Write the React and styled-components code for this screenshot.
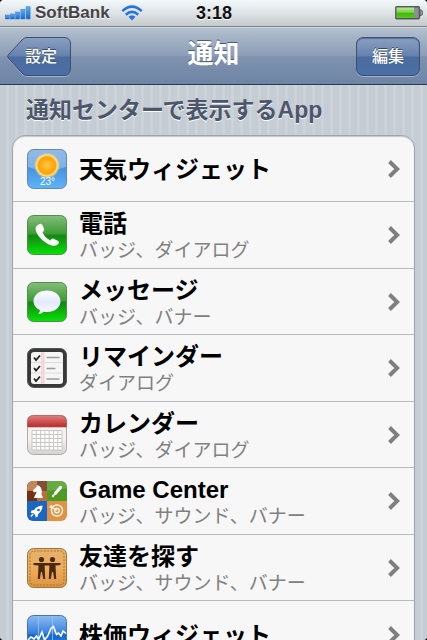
import React from "react";
import styled, { createGlobalStyle } from "styled-components";

const GlobalStyle = createGlobalStyle`
  * {
    box-sizing: border-box;
  }
  body {
    margin: 0;
    background: #000;
    font-family: "Liberation Sans", "Noto Sans CJK JP", sans-serif;
  }
`;

const apps = [
  { name: "天気ウィジェット", icon: WeatherIcon },
  { name: "電話", detail: "バッジ、ダイアログ", icon: PhoneIcon },
  { name: "メッセージ", detail: "バッジ、バナー", icon: MessageIcon },
  { name: "リマインダー", detail: "ダイアログ", icon: ReminderIcon },
  { name: "カレンダー", detail: "バッジ、ダイアログ", icon: CalendarIcon },
  { name: "Game Center", detail: "バッジ、サウンド、バナー", icon: GameIcon },
  { name: "友達を探す", detail: "バッジ、サウンド、バナー", icon: FriendsIcon },
  { name: "株価ウィジェット", icon: StocksIcon },
];

function App() {
  return (
    <Screen>
      <GlobalStyle />
      <StatusBar>
        <Carrier>
          <SignalIcon />
          <span>SoftBank</span>
          <WifiIcon />
        </Carrier>
        <Time>3:18</Time>
        <BatteryIcon />
      </StatusBar>
      <NavBar>
        <BackButton type="button">
          <BackShape />
          <span>設定</span>
        </BackButton>
        <Title>通知</Title>
        <EditButton type="button">編集</EditButton>
      </NavBar>
      <Content>
        <SectionTitle>通知センターで表示するApp</SectionTitle>
        <List>
          {apps.map(({ name, detail, icon: Icon }) => (
            <Item key={name}>
              <Row href="#">
                <Icon />
                <Labels>
                  <Name>{name}</Name>
                  {detail && <Detail>{detail}</Detail>}
                </Labels>
                <Chevron />
              </Row>
            </Item>
          ))}
        </List>
      </Content>
    </Screen>
  );
}

const Screen = styled.div`
  display: flex;
  flex-direction: column;
  height: 100vh;
  overflow: hidden;
  border-radius: 4px;
  background: #c5ccd4;
`;

const StatusBar = styled.header`
  display: grid;
  grid-template-columns: 1fr auto 1fr;
  align-items: center;
  flex: none;
  height: 27px;
  padding: 0 4px 0 5px;
  background: linear-gradient(#f3f8fa, #dde3e6 50%, #c4cacc);
  border-bottom: 1px solid #7e8386;
  > svg {
    justify-self: end;
  }
`;

const Carrier = styled.div`
  display: flex;
  align-items: center;
  color: #444;
  font-size: 17px;
  font-weight: bold;
  text-shadow: 0 1px 0 #fff;
  span {
    margin: 0 11px 0 4px;
  }
`;

const Time = styled.div`
  color: #111;
  font-size: 18px;
  font-weight: bold;
  text-shadow: 0 1px 0 #fff;
`;

const NavBar = styled.nav`
  display: grid;
  grid-template-columns: 1fr auto 1fr;
  align-items: center;
  flex: none;
  height: 58px;
  padding: 0 7px;
  background: linear-gradient(#b2bfce, #8b9cb6 50%, #8093b0 51%, #6d84a5);
  border-top: 1px solid #ced7e1;
  border-bottom: 1px solid #2f3b4d;
`;

const Title = styled.h1`
  margin: 0;
  color: #fff;
  font-size: 26px;
  line-height: 34px;
  padding-bottom: 4px;
  text-shadow: 0 -1px 0 #4c5c74;
`;

const NavButton = styled.button`
  height: 39px;
  width: 64px;
  padding: 0 0 2px;
  border: 0;
  background: none;
  color: #fff;
  font-family: inherit;
  font-size: 16px;
  font-weight: 500;
  text-shadow: 0 -1px 0 #33486b;
  cursor: pointer;
`;

const BackButton = styled(NavButton)`
  position: relative;
  span {
    position: relative;
    padding-left: 4px;
  }
  svg {
    position: absolute;
    top: 0;
    left: 0;
  }
`;

const EditButton = styled(NavButton)`
  justify-self: end;
  border: 1px solid #3b5074;
  border-radius: 7px;
  background: linear-gradient(#8ba0c0, #6481ad 49%, #4b6c9f 51%, #4b6fa6);
  box-shadow: 0 1px 0 #9fb0c8, inset 0 1px 1px #5b7297;
`;

const Content = styled.main`
  flex: 1;
  min-height: 0;
  overflow: auto;
  scrollbar-width: none;
  padding: 8px 12px;
  background: repeating-linear-gradient(
    90deg,
    #c5ccd4 0,
    #c5ccd4 6px,
    #cbd2d8 6px,
    #cbd2d8 9px
  );
`;

const SectionTitle = styled.h2`
  margin: 0 0 8px;
  padding-left: 14px;
  color: #4c566c;
  font-size: 23px;
  line-height: 34px;
  text-shadow: 0 1px 0 #fff;
`;

const List = styled.ul`
  margin: 0;
  padding: 0;
  list-style: none;
  background: #f7f7f7;
  border: 1px solid #a0a5ab;
  border-radius: 13px;
  box-shadow: inset 0 1px 1px #c4c7ca;
  overflow: hidden;
`;

const Item = styled.li`
  height: 66px;
  border-bottom: 1px solid #b9bbbd;
  &:nth-child(even) {
    height: 67px;
  }
  &:last-child {
    border-bottom: 0;
  }
`;

const Row = styled.a`
  display: flex;
  align-items: center;
  gap: 12px;
  height: 100%;
  padding: 0 14px;
  color: #000;
  text-decoration: none;
  > svg {
    flex: none;
  }
`;

const Labels = styled.span`
  display: flex;
  flex-direction: column;
  flex: 1;
  min-width: 0;
  padding-top: 2px;
  white-space: nowrap;
`;

const Name = styled.span`
  font-size: 24px;
  font-weight: bold;
  line-height: 30px;
`;

const Detail = styled.span`
  color: #808080;
  font-size: 19px;
  line-height: 24px;
`;

function SignalIcon() {
  return (
    <svg width="26" height="14" viewBox="0 0 26 14" aria-hidden="true">
      <defs>
        <linearGradient id="signal" x2="0" y2="1">
          <stop offset="0" stopColor="#58b0f5" />
          <stop offset="1" stopColor="#1567d6" />
        </linearGradient>
      </defs>
      <g fill="url(#signal)" stroke="#2a6fc4" strokeWidth=".5">
        <rect x=".3" y="9" width="4" height="4" />
        <rect x="5.5" y="8" width="4" height="5" />
        <rect x="10.7" y="6" width="4" height="7" />
        <rect x="15.9" y="3.5" width="4" height="9.5" />
        <rect x="21.1" y=".8" width="4" height="12.2" />
      </g>
    </svg>
  );
}

function WifiIcon() {
  return (
    <svg width="22" height="16" viewBox="0 0 22 16" aria-hidden="true">
      <g fill="none" stroke="#2673de" strokeWidth="2.6">
        <path d="M1.3 6.1Q11-2.8 20.7 6.1" />
        <path d="M4.8 9.7Q11 4 17.2 9.7" />
      </g>
      <path d="M7.5 11.8Q11 8.7 14.5 11.8L11 15.5z" fill="#2673de" />
    </svg>
  );
}

function BatteryIcon() {
  return (
    <svg width="28" height="14" viewBox="0 0 28 14" aria-hidden="true">
      <defs>
        <linearGradient id="charge" x2="0" y2="1">
          <stop offset="0" stopColor="#b5ec91" />
          <stop offset=".45" stopColor="#77d044" />
          <stop offset=".55" stopColor="#43b90f" />
          <stop offset="1" stopColor="#58c51f" />
        </linearGradient>
      </defs>
      <rect x=".8" y=".8" width="23.6" height="12" rx="1" fill="#8c8f95" stroke="#55585e" strokeWidth="1.4" />
      <rect x="1.6" y="1.6" width="17.4" height="10.4" fill="url(#charge)" />
      <path d="M25 4h1.2q1.3 0 1.3 2.8t-1.3 2.8H25z" fill="#a4a7ac" stroke="#55585e" />
    </svg>
  );
}

function BackShape() {
  return (
    <svg width="64" height="40" viewBox="0 0 64 40" aria-hidden="true">
      <defs>
        <linearGradient id="back" x2="0" y2="1">
          <stop offset="0" stopColor="#8ba0c0" />
          <stop offset=".49" stopColor="#6481ad" />
          <stop offset=".51" stopColor="#4b6c9f" />
          <stop offset="1" stopColor="#4b6fa6" />
        </linearGradient>
      </defs>
      <path d="M20 1.5h37q6.5 0 6.5 6.5v25q0 6.5-6.5 6.5H20q-3 0-5-2.6L1.5 22q-1-1.5 0-3L15 4.5q2-3 5-3z" fill="none" stroke="#9fb0c8" />
      <path d="M20 .5h37q6.5 0 6.5 6.5v25q0 6.5-6.5 6.5H20q-3 0-5-2.5L1.2 21q-1-1.5 0-3L15 3q2-2.5 5-2.5z" fill="url(#back)" stroke="#3b5074" />
    </svg>
  );
}

function Chevron() {
  return (
    <svg width="13" height="18" viewBox="0 0 13 18" aria-hidden="true">
      <path d="M2.5 1.5L10.2 9l-7.7 7.5" fill="none" stroke="#7f7f7f" strokeWidth="4" />
    </svg>
  );
}

function WeatherIcon() {
  return (
    <svg width="40" height="40" viewBox="0 0 40 40" aria-hidden="true">
      <defs>
        <linearGradient id="sky" x2="0" y2="1">
          <stop offset="0" stopColor="#6b9fdc" />
          <stop offset=".5" stopColor="#4a93e0" />
          <stop offset="1" stopColor="#5cb5f8" />
        </linearGradient>
        <radialGradient id="sun">
          <stop offset="0" stopColor="#ffcb3c" />
          <stop offset=".65" stopColor="#ff9e10" />
          <stop offset=".8" stopColor="#ffe36b" />
          <stop offset="1" stopColor="#ffe36b" stopOpacity="0" />
        </radialGradient>
      </defs>
      <rect x=".5" y=".5" width="39" height="39" rx="6" fill="url(#sky)" stroke="#6688b5" />
      <path d="M1 7q0-6 6-6h26q6 0 6 6v11Q20 25 1 18z" fill="#fff" opacity=".28" />
      <circle cx="20" cy="16.5" r="13" fill="url(#sun)" />
      <text x="20.5" y="36" fill="#fff" fontSize="10" textAnchor="middle">23°</text>
    </svg>
  );
}

function GreenTile({ id }) {
  return (
    <>
      <defs>
        <linearGradient id={id} x2="0" y2="1">
          <stop offset="0" stopColor="#86bd7d" />
          <stop offset=".46" stopColor="#3d9c35" />
          <stop offset=".52" stopColor="#148713" />
          <stop offset="1" stopColor="#06e305" />
        </linearGradient>
      </defs>
      <rect x=".5" y=".5" width="39" height="39" rx="6" fill={`url(#${id})`} stroke="#4d9149" />
    </>
  );
}

function PhoneIcon() {
  return (
    <svg width="40" height="40" viewBox="0 0 40 40" aria-hidden="true">
      <GreenTile id="phone" />
      <path
        d="M11.5 9.500c2-1.500 3.500-.8 4.300 1.200l1.300 3c.7 1.700-.5 2.500-1.600 3.500 1.500 3.500 4 6.200 7.800 8.200 1.200-1.300 2-2.300 3.600-1.500l3.500 1.700c2 1 2 2.500.3 4-2.500 2-6.500 1.300-10.700-1.200C14 24.800 9.500 19.500 8.600 14.500c-.3-2.200 1-3.800 2.900-5z"
        fill="#f8fbf8"
      />
    </svg>
  );
}

function MessageIcon() {
  return (
    <svg width="40" height="40" viewBox="0 0 40 40" aria-hidden="true">
      <GreenTile id="message" />
      <defs>
        <linearGradient id="bubble" x2="0" y2="1">
          <stop offset="0" stopColor="#fff" />
          <stop offset=".5" stopColor="#e4e9fa" />
          <stop offset="1" stopColor="#fbfcff" />
        </linearGradient>
      </defs>
      <path
        d="M20 8.500c7.800 0 13.500 4.700 13.500 10.700S27.800 30 20 30c-1.200 0-2.300-.1-3.400-.3-1.500 1.500-3.400 2.200-5.300 2.200 1.200-1.300 1.700-2.500 1.600-3.800C9 26 6.500 22.900 6.500 19.200 6.500 13.200 12.200 8.500 20 8.500z"
        fill="url(#bubble)"
      />
    </svg>
  );
}

function ReminderIcon() {
  return (
    <svg width="40" height="40" viewBox="0 0 40 40" aria-hidden="true">
      <rect x=".5" y=".5" width="39" height="39" rx="6.5" fill="#37383a" stroke="#555" />
      <rect x="4" y="4" width="32" height="32" rx="3" fill="#f6f5f5" />
      <path d="M14.8 4v32M16.8 4v32" stroke="#f1bdc8" />
      <path d="M4 14.5h32M4 25h32" stroke="#ddd" />
      <g fill="none" stroke="#222" strokeWidth="1.8">
        <path d="M7 9.5l2 2.500 4-4.500" />
        <path d="M7 20l2 2.500 4-4.500" />
        <path d="M7 30.500l2 2.500 4-4.500" />
      </g>
      <path d="M19.5 9.500h13M19.5 20.500h9M19.5 31h13" stroke="#999" strokeWidth="1.5" />
    </svg>
  );
}

function CalendarIcon() {
  return (
    <svg width="40" height="40" viewBox="0 0 40 40" aria-hidden="true">
      <defs>
        <linearGradient id="calTop" x2="0" y2="1">
          <stop offset="0" stopColor="#e08080" />
          <stop offset="1" stopColor="#b92828" />
        </linearGradient>
        <linearGradient id="calPage" x2="0" y2="1">
          <stop offset=".6" stopColor="#f4f3f2" />
          <stop offset="1" stopColor="#d4d2d0" />
        </linearGradient>
      </defs>
      <rect x=".5" y=".5" width="39" height="39" rx="6" fill="url(#calPage)" stroke="#b3a9a6" />
      <path d="M.5 12V6.500q0-6 6-6h27q6 0 6 6V12z" fill="url(#calTop)" stroke="#ad5c58" strokeWidth=".7" />
      <rect x="5" y="15.5" width="30" height="19.5" fill="#fff" />
      <path
        d="M5 15.500h30M5 19.500h30M5 23.500h30M5 27.500h30M5 31.500h30M5 35h30M5 15.500v19.500M9.300 15.500v19.500M13.600 15.500v19.500M17.900 15.500v19.500M22.200 15.500v19.500M26.500 15.500v19.500M30.800 15.500v19.500M35 15.500v19.500"
        stroke="#c4c2c1"
        strokeWidth=".9"
      />
    </svg>
  );
}

function GameIcon() {
  return (
    <svg width="40" height="40" viewBox="0 0 40 40" aria-hidden="true">
      <defs>
        <clipPath id="gameTile">
          <rect width="40" height="40" rx="6" />
        </clipPath>
      </defs>
      <g clipPath="url(#gameTile)">
        <path d="M0 0h20v20H0z" fill="#733014" />
        <path d="M0 0h10v10H0zM10 10h10v10H10z" fill="#b9713a" />
        <path d="M20 0h20v20H20z" fill="#4e9b24" />
        <path d="M0 20h20v20H0z" fill="#1a66c4" />
        <path d="M20 20h20v20H20z" fill="#e09245" />
        <path d="M0 0h40v7Q20 12 0 9z" fill="#fff" opacity=".15" />
      </g>
      <path d="M7 17h9l-1.500-3.500c1-4-.2-8-4-9.500L9.800 5.500 6 9.500l.8 2 3-.8-2 4z" fill="#fff" />
      <path d="M26.5 14.500l2-2.200" stroke="#fff" strokeWidth="1.5" />
      <path d="M28.5 12.300L33.5 6.500" stroke="#fff" strokeWidth="3.2" strokeLinecap="round" />
      <circle cx="26" cy="15" r="1.2" fill="#fff" />
      <path d="M15.5 24.500c-4.500.2-7 2-8.300 4.500l-2.700.6-.8 2.400 2.500.1 2 1.900.4 2.600 2.200-1.200.4-2.500c2.500-1.600 4.300-4.500 4.300-8.400z" fill="#fff" />
      <circle cx="11.5" cy="29" r="1.3" fill="#1a66c4" />
      <path d="M6 33l-2 2.500" stroke="#fff" strokeWidth="1.5" />
      <g fill="none" stroke="#fff5e5" strokeWidth="1.4">
        <circle cx="30" cy="29.5" r="5.5" />
        <circle cx="30" cy="29.5" r="2.3" />
        <path d="M30 29.500l-5.500-3.500M24 24l1 2.500-2.500-.5" />
      </g>
    </svg>
  );
}

function FriendsIcon() {
  return (
    <svg width="40" height="40" viewBox="0 0 40 40" aria-hidden="true">
      <defs>
        <linearGradient id="leather" x2="0" y2="1">
          <stop offset="0" stopColor="#e2b16c" />
          <stop offset=".5" stopColor="#efae5c" />
          <stop offset="1" stopColor="#dc933f" />
        </linearGradient>
      </defs>
      <rect x=".5" y=".5" width="39" height="39" rx="6" fill="url(#leather)" stroke="#a47338" />
      <rect x="3" y="3" width="34" height="34" rx="4" fill="none" stroke="#a87331" strokeDasharray="2 1.3" />
      <g fill="#49290f">
        <circle cx="14.5" cy="11.5" r="2.6" />
        <circle cx="25.5" cy="11.5" r="2.6" />
        <path d="M6.500 15h27v2l-5 .6.7 13.400h-2l-1.200-7h-1l-1.200 7h-2l.6-13.400h-4.800l.6 13.400h-2l-1.200-7h-1l-1.200 7h-2l.7-13.400-5-.6z" />
      </g>
    </svg>
  );
}

function StocksIcon() {
  return (
    <svg width="40" height="40" viewBox="0 0 40 40" aria-hidden="true">
      <defs>
        <linearGradient id="stocks" x2="0" y2="1">
          <stop offset="0" stopColor="#8dbcf3" />
          <stop offset=".45" stopColor="#3780dd" />
          <stop offset=".5" stopColor="#1765cb" />
          <stop offset="1" stopColor="#3b94ee" />
        </linearGradient>
      </defs>
      <rect x=".5" y=".5" width="39" height="39" rx="6" fill="url(#stocks)" stroke="#4574b3" />
      <path d="M11.5 1v38M25.5 1v38" stroke="#9cc6f2" strokeWidth=".8" />
      <path
        d="M1 25l3-3 3 2 2.500-3 2 3.500 3.500-7.500 2.500 8 3.500-4.500 3-7 2.500-2 3 8 2-1.500 2.500 3 2-5 3 2.500"
        fill="none"
        stroke="#fff"
        strokeWidth="1.6"
      />
    </svg>
  );
}

export default App;
